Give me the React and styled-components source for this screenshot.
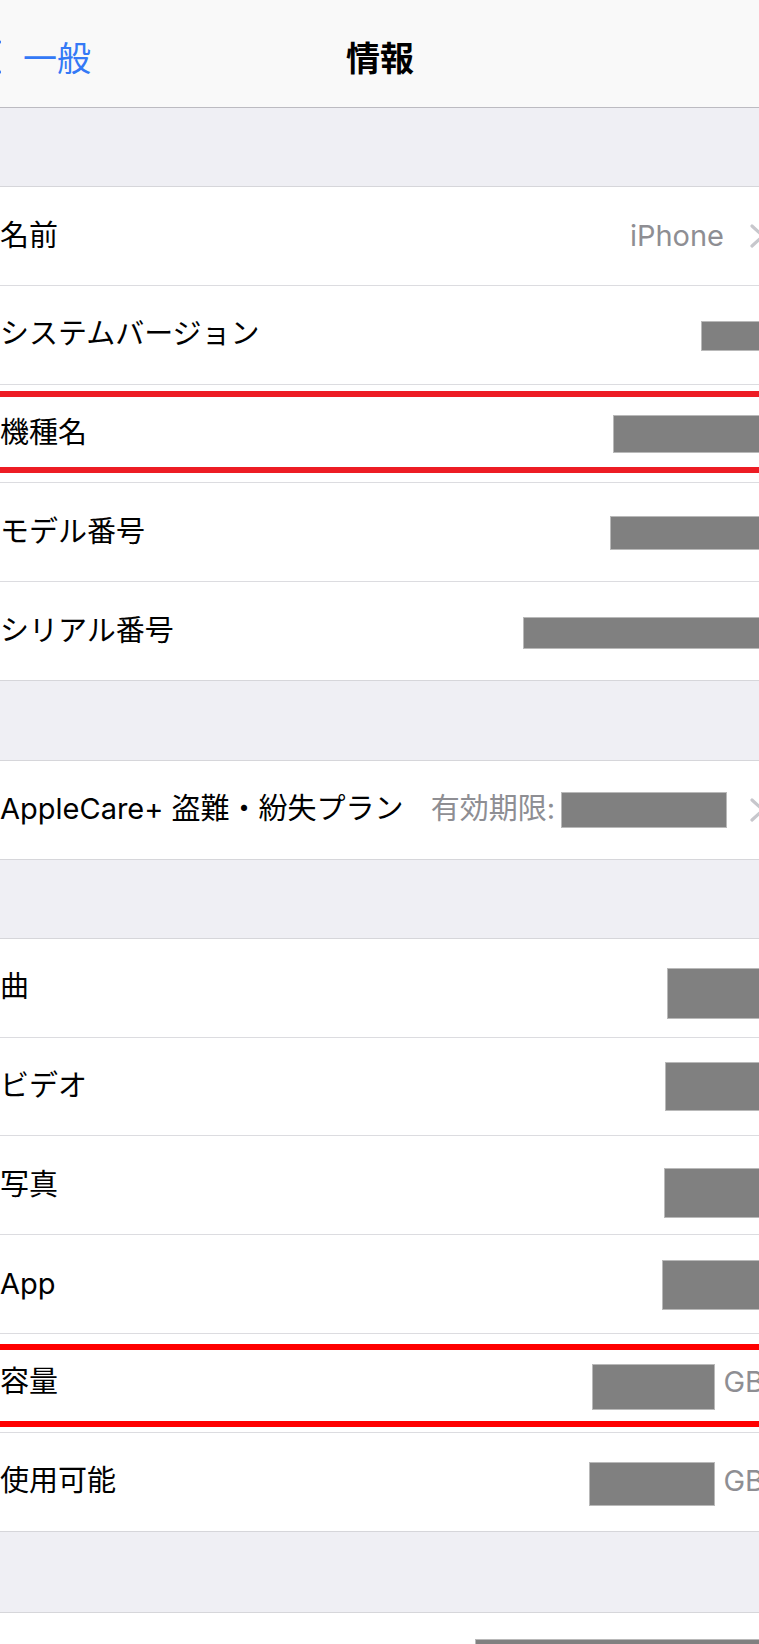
import React from "react";
import styled, { createGlobalStyle } from "styled-components";

const GlobalStyle = createGlobalStyle`
  html, body {
    margin: 0;
    padding: 0;
    background: #efeff4;
  }
  body {
    font-family: "Inter", "Noto Sans CJK JP", sans-serif;
    -webkit-font-smoothing: antialiased;
  }
`;

const Viewport = styled.div`
  width: 759px;
  height: 1644px;
  overflow: hidden;
  background: #efeff4;
`;

const Screen = styled.div`
  width: 820px;
  margin-left: -30px;
`;

const NavBar = styled.header`
  display: grid;
  grid-template-columns: 1fr auto 1fr;
  align-items: center;
  box-sizing: border-box;
  height: 108px;
  padding: 7px 12px 0 12px;
  background: #f9f9f9;
  border-bottom: 1px solid #bcbbc1;
`;

const BackButton = styled.div`
  display: flex;
  align-items: center;
  gap: 22px;
  margin-left: 1px;
  color: #3479f6;
  font-family: "Noto Sans CJK JP", sans-serif;
  font-size: 34px;
  line-height: 1;
`;

const Title = styled.h1`
  margin: 0;
  font-family: "Noto Sans CJK JP", sans-serif;
  font-size: 34px;
  font-weight: 700;
  color: #000;
  line-height: 1;
`;

const Gap = styled.div`
  height: ${(p) => p.$h}px;
`;

const Section = styled.section`
  background: #fff;
  border-top: 1px solid #d6d6da;
  border-bottom: 1px solid #d6d6da;
`;

const Row = styled.div`
  position: relative;
  display: flex;
  align-items: center;
  height: 97.8px;
  padding: 0 24px 0 30px;
  & + & {
    border-top: 1px solid #dcdce0;
  }
`;

const Label = styled.span`
  flex: 1;
  font-size: 29px;
  line-height: 1.2;
  color: #000;
  white-space: nowrap;
`;

const Detail = styled.span`
  display: flex;
  align-items: center;
  gap: ${(p) => p.$gap || 0}px;
  font-size: 29px;
  line-height: 1.2;
  color: #8e8e93;
  white-space: nowrap;
`;

const Unit = styled.span`
  padding-right: 2px;
`;

const Redacted = styled.span`
  display: block;
  box-sizing: border-box;
  width: ${(p) => p.$w}px;
  height: ${(p) => p.$h}px;
  background: #808080;
  border: 1px solid #b9b9b9;
  transform: translateY(${(p) => p.$dy || 0}px);
`;

const ChevronBox = styled.svg`
  flex: none;
  margin-left: ${(p) => p.$ml}px;
  display: block;
`;

const Highlight = styled.div`
  position: absolute;
  left: 0;
  right: 0;
  top: ${(p) => p.$top}px;
  bottom: ${(p) => p.$bottom}px;
  border-top: 6px solid ${(p) => p.$color};
  border-bottom: 6px solid ${(p) => p.$color};
  pointer-events: none;
`;

const Chevron = ({ ml = 26 }) => (
  <ChevronBox $ml={ml} width="16" height="24" viewBox="0 0 16 24">
    <path d="M2 2 L13 12 L2 22" fill="none" stroke="#c7c7cc" strokeWidth="3.2" strokeLinecap="round" strokeLinejoin="round" />
  </ChevronBox>
);

const BackChevron = () => (
  <svg width="18" height="34" viewBox="0 0 18 34" style={{ display: "block" }}>
    <path d="M16 2 L3 17 L16 32" fill="none" stroke="#3479f6" strokeWidth="4" strokeLinecap="round" strokeLinejoin="round" />
  </svg>
);

const section1 = [
  { label: "システムバージョン", box: { w: 65, h: 30, dy: 1 } },
  { label: "機種名", box: { w: 153, h: 38, dy: 1 }, mark: { top: 6, bottom: 9, color: "#ed1c24" } },
  { label: "モデル番号", box: { w: 156, h: 34, dy: 1 } },
  { label: "シリアル番号", box: { w: 243, h: 32, dy: 2 } },
];

const section3 = [
  { label: "曲", box: { w: 99, h: 51, dy: 6 } },
  { label: "ビデオ", box: { w: 101, h: 49, dy: 0 } },
  { label: "写真", box: { w: 102, h: 50, dy: 8 } },
  { label: "App", box: { w: 104, h: 50, dy: 1 } },
];

const RedactedRow = ({ label, box, mark }) => (
  <Row>
    <Label>{label}</Label>
    <Detail>
      <Redacted $w={box.w} $h={box.h} $dy={box.dy} />
    </Detail>
    {mark && <Highlight $top={mark.top} $bottom={mark.bottom} $color={mark.color} />}
  </Row>
);

const StorageRow = ({ label, w, h, dy, mark }) => (
  <Row>
    <Label>{label}</Label>
    <Detail $gap={8}>
      <Redacted $w={w} $h={h} $dy={dy} />
      <Unit>GB</Unit>
    </Detail>
    {mark && <Highlight $top={mark.top} $bottom={mark.bottom} $color={mark.color} />}
  </Row>
);

export default function App() {
  return (
    <>
      <GlobalStyle />
      <Viewport>
        <Screen>
          <NavBar>
            <BackButton>
              <BackChevron />
              一般
            </BackButton>
            <Title>情報</Title>
            <span />
          </NavBar>

          <Gap $h={78} />
          <Section>
            <Row>
              <Label>名前</Label>
              <Detail>iPhone</Detail>
              <Chevron ml={26} />
            </Row>
            {section1.map((r) => (
              <RedactedRow key={r.label} {...r} />
            ))}
          </Section>

          <Gap $h={79} />
          <Section>
            <Row>
              <Label>AppleCare+ 盗難・紛失プラン</Label>
              <Detail $gap={6}>
                有効期限:
                <Redacted $w={166} $h={36} $dy={0} />
              </Detail>
              <Chevron ml={23} />
            </Row>
          </Section>

          <Gap $h={78} />
          <Section>
            {section3.map((r) => (
              <RedactedRow key={r.label} {...r} />
            ))}
            <StorageRow label="容量" w={123} h={46} dy={4} mark={{ top: 10, bottom: 5, color: "#ff0000" }} />
            <StorageRow label="使用可能" w={126} h={44} dy={2} />
          </Section>

          <Gap $h={80} />
          <Section>
            <RedactedRow label="" box={{ w: 291, h: 40, dy: -2 }} />
          </Section>
        </Screen>
      </Viewport>
    </>
  );
}
